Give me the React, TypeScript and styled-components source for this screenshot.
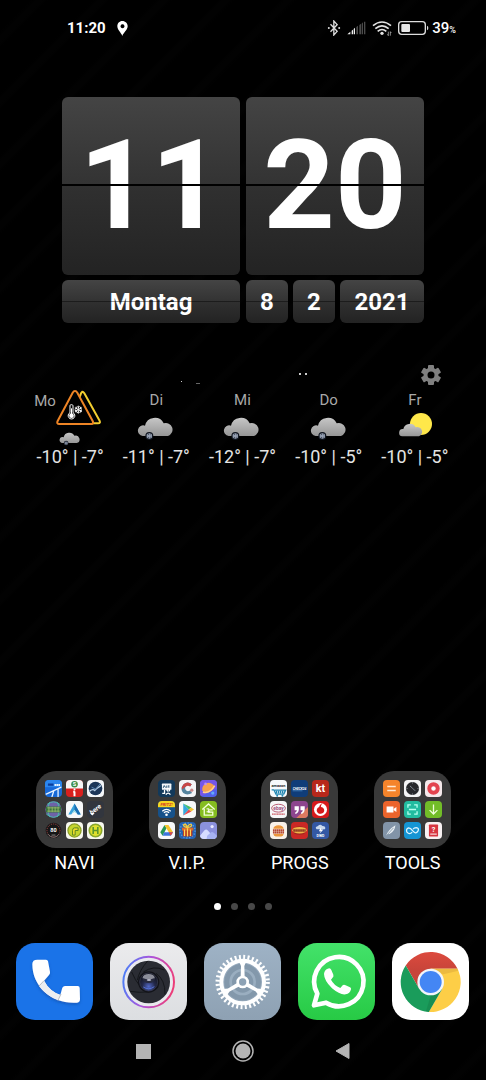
import React from "react";
import styled, { createGlobalStyle } from "styled-components";

const GlobalStyle = createGlobalStyle`
  *, *::before, *::after { box-sizing: border-box; }
  body {
    margin: 0;
    background: #000;
    color: #fff;
    font-family: Roboto, "Liberation Sans", sans-serif;
  }
  button { font: inherit; color: inherit; background: none; border: 0; padding: 0; cursor: pointer; }
  svg { display: block; }
`;

const Screen = styled.main`
  min-height: 100vh;
  display: flex;
  flex-direction: column;
  background: repeating-linear-gradient(135deg, #000 0 22px, #020202 26px 30px, #000 34px 44px);
`;

/* Status bar */

const StatusBar = styled.header`
  display: flex;
  align-items: center;
  justify-content: space-between;
  height: 56px;
  padding: 0 30px 0 67px;
`;

const StatusGroup = styled.div<{ $gap: number }>`
  display: flex;
  align-items: center;
  gap: ${(p) => p.$gap}px;
`;

const StatusTime = styled.span`
  font-size: 15px;
  font-weight: 700;
`;

const Percent = styled.span`
  font-size: 15px;
  font-weight: 500;
  small { font-size: 9px; }
`;

const BatteryGroup = styled.div`
  display: flex;
  align-items: center;
  gap: 3px;
`;

/* Flip clock */

const Clock = styled.section`
  display: grid;
  grid-template-columns: 1fr 1fr;
  gap: 5px 6px;
  margin-top: 41px;
  padding: 0 62px;
`;

const Flap = styled.div<{ $big?: boolean }>`
  position: relative;
  display: flex;
  align-items: center;
  justify-content: center;
  overflow: hidden;
  border-radius: 6px;
  background: linear-gradient(#444, #333 49%, #303030 50%, #232323);
  font-weight: 700;
  ${(p) => (p.$big ? "aspect-ratio: 1; font-size: 125px; line-height: 176px;" : "height: 43px; font-size: 24px;")}
  &::after {
    content: "";
    position: absolute;
    left: 0;
    right: 0;
    top: ${(p) => (p.$big ? "87px" : "21px")};
    height: ${(p) => (p.$big ? "2px" : "1px")};
    background: ${(p) => (p.$big ? "#000" : "rgba(0, 0, 0, 0.4)")};
  }
`;

const DateParts = styled.div`
  display: grid;
  grid-template-columns: 1fr 1fr 2fr;
  gap: 5px;
`;

/* Weather */

const Weather = styled.section`
  margin-top: 41px;
  padding: 0 28px 0 27px;
`;

const WeatherTop = styled.div`
  display: flex;
  align-items: center;
  justify-content: flex-end;
  gap: 110px;
  height: 25px;
  padding: 0 17px 3px 0;
`;

const Days = styled.div`
  display: grid;
  grid-template-columns: repeat(5, 1fr);
`;

const Day = styled.div`
  display: flex;
  flex-direction: column;
  align-items: center;
`;

const DayHead = styled.div`
  display: flex;
  flex-direction: column;
  align-items: center;
  gap: 1px;
  height: 57px;
`;

const AlertRow = styled.div`
  display: flex;
  align-items: flex-start;
  height: 41px;
  padding: 1px 5px 0 0;
`;

const DayName = styled.span`
  font-size: 15px;
  line-height: 22px;
  color: #a8a8a8;
`;

const Temps = styled.span`
  font-size: 18px;
  line-height: 22px;
  color: #e4e4e4;
  white-space: nowrap;
`;

const Spacer = styled.div`
  flex: 1;
  min-height: 24px;
`;

/* Folders */

const Folders = styled.section`
  display: grid;
  grid-template-columns: repeat(4, 1fr);
  padding: 0 17px 0 18px;
`;

const Folder = styled.button`
  display: flex;
  flex-direction: column;
  align-items: center;
  gap: 3px;
`;

const FolderTile = styled.span`
  display: grid;
  grid-template-columns: repeat(3, 17px);
  gap: 4px;
  padding: 9px;
  border-radius: 20px;
  background: #393939;
`;

const FolderLabel = styled.span`
  font-size: 18px;
  line-height: 24px;
`;

const MiniSvg = styled.svg`
  width: 17px;
  height: 17px;
  border-radius: 4px;
  overflow: hidden;
`;

/* Pager, dock and navigation */

const Pager = styled.div`
  display: flex;
  justify-content: center;
  gap: 10px;
  margin: 28px 0 33px;
`;

const Dot = styled.span<{ $active?: boolean }>`
  width: 7px;
  height: 7px;
  border-radius: 50%;
  background: ${(p) => (p.$active ? "#fff" : "#484848")};
`;

const Dock = styled.nav`
  display: flex;
  justify-content: space-between;
  padding: 0 17px 0 16px;
`;

const DockButton = styled.button`
  width: 77px;
  height: 77px;
  border-radius: 19px;
  overflow: hidden;
`;

const NavBar = styled.nav`
  display: flex;
  align-items: center;
  justify-content: center;
  gap: 76px;
  padding: 19px 1px 17px 0;
`;

const NavButton = styled.button`
  width: 24px;
  height: 24px;
`;

const CLOUD =
  "M371 245 A16 16 0 1 1 378 214 A30 30 0 0 1 434 207 A20 20 0 1 1 447 245 Z";

const Flake = ({ x, y, r = 9, color = "#b4c0d4" }: { x: number; y: number; r?: number; color?: string }) => (
  <g transform={`translate(${x} ${y})`} stroke={color} strokeWidth={r / 4.5} fill="none">
    {[0, 60, 120].map((a) => (
      <g key={a} transform={`rotate(${a})`}>
        <path d={`M0 ${-r} V${r} M${-r / 3} ${-r * 0.85} L0 ${-r * 0.5} L${r / 3} ${-r * 0.85} M${-r / 3} ${r * 0.85} L0 ${r * 0.5} L${r / 3} ${r * 0.85}`} />
      </g>
    ))}
  </g>
);

const CloudGradient = ({ id }: { id: string }) => (
  <linearGradient id={id} x1="0" y1="0" x2="0" y2="1">
    <stop offset="0" stopColor="#c6c6c6" />
    <stop offset="1" stopColor="#969696" />
  </linearGradient>
);

const SnowCloud = ({ small, id }: { small?: boolean; id: string }) => (
  <svg
    width={small ? 22 : 38}
    height={small ? 15 : 30}
    viewBox={small ? "354 182 114 78" : "354 173 114 90"}
    aria-hidden="true"
  >
    <defs><CloudGradient id={id} /></defs>
    <path d={CLOUD} fill={`url(#${id})`} />
    <circle cx="391" cy="245" r="12" fill="#10151f" />
    <Flake x={391} y={245} />
  </svg>
);

const SunCloud = () => (
  <svg width="38" height="30" viewBox="468 171 114 90" aria-hidden="true">
    <defs><CloudGradient id="sunCloud" /></defs>
    <circle cx="543" cy="207" r="33" fill="#ffe84a" />
    <path d="M487 244 A11 11 0 0 1 490 222 A20 20 0 0 1 527 217 A14 14 0 1 1 537 244 Z" fill="url(#sunCloud)" />
  </svg>
);

const AlertIcon = () => (
  <svg width="45" height="36" viewBox="107 107 135 108" aria-hidden="true">
    <path d="M186 112 Q189 112 192 117 L237 198 Q242 207 233 207 H150 L182 117 Z" fill="#000" stroke="#f2cd2f" strokeWidth="6" />
    <path d="M164 110 Q168 110 171 115 L217 200 Q221 209 213 209 H117 Q108 209 112 200 L157 115 Q160 110 164 110Z" fill="#000" stroke="#ee8425" strokeWidth="6" />
    <path d="M149 175 V154 Q149 151 153 151 Q158 151 158 154 V175 A10 10 0 1 1 149 175Z" fill="none" stroke="#fff" strokeWidth="3" />
    <path d="M153.500 162 V186" stroke="#fff" strokeWidth="3" />
    <circle cx="153.500" cy="184" r="7" fill="#fff" />
    <Flake x={174} y={166} r={12} color="#fff" />
  </svg>
);

const days = [
  { name: "Mo", temps: "-10° | -7°" },
  { name: "Di", temps: "-11° | -7°" },
  { name: "Mi", temps: "-12° | -7°" },
  { name: "Do", temps: "-10° | -5°" },
  { name: "Fr", temps: "-10° | -5°" },
];

/* Small app icons, each drawn on a 52 x 52 field */

const Mini = ({ bg, children }: { bg: string; children?: React.ReactNode }) => (
  <MiniSvg viewBox="0 0 52 52" aria-hidden="true">
    <rect width="52" height="52" fill={bg} />
    {children}
  </MiniSvg>
);

const Word = ({ x = 26, y, size, fill = "#fff", italic, children }: { x?: number; y: number; size: number; fill?: string; italic?: boolean; children: string }) => (
  <text x={x} y={y} fontSize={size} fill={fill} fontWeight="700" fontStyle={italic ? "italic" : "normal"} textAnchor="middle">
    {children}
  </text>
);

const naviIcons = [
  <Mini key="map" bg="#1769d8">
    <rect width="52" height="22" fill="#2b86ee" />
    <path d="M2 44 L50 22 M21 52 L27 33 M40 52 V28" stroke="#e8f3ff" strokeWidth="4" />
    <path d="M9 14 H26" fill="none" stroke="#0b3c9a" strokeWidth="7" />
    <path d="M29 15 H47" stroke="#e8f3ff" strokeWidth="6" strokeDasharray="5 1" />
  </Mini>,
  <Mini key="sbahn" bg="#d9201d">
    <rect width="52" height="26" fill="#f6f6f6" />
    <circle cx="26" cy="13" r="10" fill="#3b8c46" />
    <Word y={19} size={17}>S</Word>
    <path d="M26 35 V50 M22 36 H27" stroke="#fff" strokeWidth="6" />
    <circle cx="26" cy="29" r="3" fill="#fff" />
  </Mini>,
  <Mini key="nina" bg="#f4f6f8">
    <circle cx="26" cy="26" r="21" fill="#1c3658" />
    <path d="M8 34 Q18 26 24 32 Q30 24 43 17" fill="none" stroke="#bcd3e8" strokeWidth="4" />
    <path d="M14 22 L26 28 L40 12" fill="none" stroke="#5c88b4" strokeWidth="3" />
  </Mini>,
  <Mini key="globe" bg="#393939">
    <circle cx="26" cy="26" r="25" fill="#6d62a8" />
    <path d="M7 10 Q26 -5 45 10 M4 40 Q26 60 48 40 M14 4 Q4 26 14 48 M38 4 Q48 26 38 48" fill="none" stroke="#4bb7ad" strokeWidth="3" />
    <rect x="3" y="17" width="46" height="18" fill="#37753c" />
    <path d="M7 21 H45 M7 31 H45 M12 18 V34 M22 18 V34 M31 18 V34 M40 18 V34" stroke="#93b16b" strokeWidth="3" />
  </Mini>,
  <Mini key="nav" bg="#f7f8f8">
    <path d="M26 8 L45 41 H36 L26 27 L16 41 H7 Z" fill="#3aa4dd" />
    <path d="M26 8 L45 41 H36 L26 27Z" fill="#1b6fb4" />
    <path d="M26 27 L34 39 L26 34 L18 39Z" fill="#8cd5df" />
  </Mini>,
  <Mini key="here" bg="#32363e">
    <g transform="rotate(-38 26 26)">
      <Word y={32} size={20} italic>here</Word>
    </g>
    <path d="M9 37 H23 L17 44 Z" fill="#fff" />
  </Mini>,
  <Mini key="speed" bg="#393939">
    <circle cx="26" cy="26" r="24" fill="#161616" />
    <circle cx="26" cy="26" r="20" fill="none" stroke="#a84848" strokeWidth="3" strokeDasharray="3 3" />
    <path d="M9 37 A20 20 0 0 0 43 37" fill="none" stroke="#999" strokeWidth="2" />
    <Word y={31} size={17}>80</Word>
    <path d="M20 40 H32" stroke="#888" strokeWidth="3" />
  </Mini>,
  <Mini key="bus" bg="#f7f8ee">
    <circle cx="26" cy="26" r="20" fill="#c4d62d" stroke="#8c9f27" strokeWidth="4" />
    <path d="M20 40 V26 Q20 18 26 18 H37 V26 H28 V40Z" fill="#f0dc2c" stroke="#5c8726" strokeWidth="3" />
  </Mini>,
  <Mini key="stop" bg="#f7f8ee">
    <circle cx="26" cy="26" r="19" fill="#dfe02d" stroke="#8aa82c" strokeWidth="5" />
    <path d="M19 15 V37 M33 15 V37 M19 26 H33" stroke="#5b962d" strokeWidth="5" />
  </Mini>,
];

const vipIcons = [
  <Mini key="home" bg="#12395a">
    <rect x="12" y="11" width="29" height="19" rx="2" fill="#f3f7fa" />
    <path d="M16 24 L19 17 L23 23 M27 17 V24 M33 16 V24" fill="none" stroke="#23506f" strokeWidth="3" />
    <path d="M20 30 V41 H13 M31 34 A4 4 0 1 1 32 34 M24 45 Q31 35 38 45" fill="none" stroke="#fff" strokeWidth="4" />
  </Mini>,
  <Mini key="corona" bg="#f4f5f7">
    <path d="M39 13 Q27 2 14 13 Q2 27 13 40 Q25 49 40 40 L34 32 Q25 37 20 30 Q16 22 24 17 Q30 15 34 20Z" fill="#56849e" />
    <path d="M14 13 Q26 2 39 13 L34 20 Q27 15 21 20 L9 29 Q7 20 14 13Z" fill="#c94747" />
    <circle cx="39" cy="31" r="5" fill="#ca8888" />
  </Mini>,
  <Mini key="planet" bg="#5262e8">
    <path d="M0 0 H52 V26 L0 52Z" fill="#7556e8" />
    <path d="M7 33 A20 20 0 0 1 44 19 Q43 30 28 35 Q15 39 7 33Z" fill="#f6a14d" />
    <path d="M9 37 Q30 43 45 17" fill="none" stroke="#ffd18c" strokeWidth="5" />
    <circle cx="17" cy="12" r="4" fill="#bd8df5" /><circle cx="39" cy="40" r="5" fill="#65aaf8" />
  </Mini>,
  <Mini key="fritz" bg="#16518a">
    <rect width="52" height="19" fill="#f7d820" />
    <Word y={15} size={13} fill="#d3302a" italic>FRITZ!</Word>
    <path d="M13 31 Q26 20 39 31 M18 36 Q26 29 34 36" fill="none" stroke="#fff" strokeWidth="4" />
    <circle cx="26" cy="42" r="4" fill="#fff" />
  </Mini>,
  <Mini key="play" bg="#f8f9fa">
    <path d="M13 8 V44 L30 26Z" fill="#36a9df" />
    <path d="M13 8 L38 20 L30 26Z" fill="#43bd69" />
    <path d="M13 44 L38 32 L30 26Z" fill="#e54850" />
    <path d="M37 20 L46 26 L37 32 L30 26Z" fill="#f4c338" />
  </Mini>,
  <Mini key="house" bg="#85bd20">
    <path d="M7 26 L26 9 L45 26 M13 24 V43 H39 V34 H26 V27 H39" fill="none" stroke="#f3ffd8" strokeWidth="4" />
    <path d="M20 33 H31 M20 24 H28" stroke="#fff" strokeWidth="3" />
  </Mini>,
  <Mini key="drive" bg="#f8f9fa">
    <path d="M20 9 L26 19 L14 42 L7 31Z" fill="#299756" />
    <path d="M20 9 H32 L46 31 H33Z" fill="#f6c32d" />
    <path d="M19 31 H46 L39 42 H14Z" fill="#3d77df" />
    <path d="M33 31 H46 L39 42Z" fill="#df493d" />
  </Mini>,
  <Mini key="gift" bg="#2463b4">
    <circle cx="26" cy="26" r="23" fill="none" stroke="#599adf" strokeWidth="4" strokeDasharray="4 5" />
    <rect x="12" y="23" width="29" height="21" fill="#b73520" />
    <rect x="9" y="17" width="35" height="9" fill="#db6a29" />
    <path d="M26 16 V44 M17 23 V43 M35 23 V43" stroke="#ffd559" strokeWidth="4" />
    <path d="M26 17 Q9 12 16 7 Q23 6 26 17 Q30 5 37 8 Q43 13 26 17" fill="none" stroke="#f2c941" strokeWidth="4" />
  </Mini>,
  <Mini key="gallery" bg="#8b91dd">
    <circle cx="37" cy="14" r="5" fill="#e9eaff" />
    <path d="M0 42 L13 26 Q19 20 24 26 L47 52 H0Z" fill="#d6dcff" />
    <path d="M22 42 L33 32 Q37 29 42 33 L52 42 V52 H20Z" fill="#a7b3f2" />
  </Mini>,
];

const progsIcons = [
  <Mini key="amazon" bg="#f7f9fa">
    <Word y={22} size={12} fill="#26292b">amazon</Word>
    <path d="M5 30 H12 L18 43 H42 L48 31 H15" fill="none" stroke="#2287b3" strokeWidth="4" />
    <path d="M18 37 H44" stroke="#2287b3" strokeWidth="8" strokeDasharray="4 2" />
    <circle cx="22" cy="48" r="3" fill="#2287b3" /><circle cx="38" cy="48" r="3" fill="#2287b3" />
  </Mini>,
  <Mini key="check" bg="#103d79">
    <Word y={30} size={10} italic>CHECK24</Word>
    <path d="M5 33 H35" stroke="#5a9bd5" strokeWidth="2" />
  </Mini>,
  <Mini key="kt" bg="#b7281b"><Word y={37} size={33}>kt</Word></Mini>,
  <Mini key="ebay" bg="#f6f7f8">
    <ellipse cx="26" cy="22" rx="21" ry="12" fill="none" stroke="#b85a72" strokeWidth="3" />
    <Word y={27} size={15} fill="#9e517f">ebay</Word>
    <path d="M6 40 H46" fill="none" stroke="#cc5860" strokeWidth="4" strokeDasharray="4 1" />
  </Mini>,
  <Mini key="quotes" bg="#8d458e">
    <path d="M52 18 V52 H16Z" fill="#de7a60" />
    <path d="M11 16 H24 V26 Q23 37 13 40 V35 Q18 32 18 28 H11Z M29 16 H42 V26 Q41 37 31 40 V35 Q36 32 36 28 H29Z" fill="#fff" />
  </Mini>,
  <Mini key="vodafone" bg="#d51a1b">
    <circle cx="26" cy="26" r="20" fill="#fff" />
    <path d="M33 7 Q23 10 22 18 C9 23 14 40 27 39 C43 36 39 19 27 18 Q27 11 33 7Z" fill="#d51a1b" />
  </Mini>,
  <Mini key="burger" bg="#f8f1e9">
    <path d="M10 21 Q12 10 26 10 Q40 10 42 21Z M10 36 H42 Q41 44 34 44 H18 Q11 44 10 36Z" fill="#eb963c" />
    <path d="M9 25 H43 M9 32 H43" stroke="#b54733" strokeWidth="6" strokeDasharray="5 1" />
  </Mini>,
  <Mini key="pizza" bg="#cb2825">
    <path d="M6 19 Q26 7 46 19 L41 37 Q25 42 10 36Z" fill="#9f291e" />
    <ellipse cx="26" cy="25" rx="22" ry="10" fill="#f2b348" />
    <path d="M7 26 H45" stroke="#8a361f" strokeWidth="7" strokeDasharray="5 1" />
  </Mini>,
  <Mini key="dwd" bg="#3358a4">
    <path d="M14 22 Q8 15 17 13 Q24 4 32 12 Q43 12 40 22Z" fill="#c8d9ee" />
    <path d="M27 17 L21 28 H27 L23 36 L35 23 H28Z" fill="#fff" />
    <Word y={47} size={11}>DWD</Word>
  </Mini>,
];

const toolsIcons = [
  <Mini key="calc" bg="#f5842b"><path d="M13 20 H39 M13 32 H39" stroke="#ffe8d2" strokeWidth="5" /></Mini>,
  <Mini key="compass" bg="#f4f5f6">
    <circle cx="26" cy="26" r="20" fill="#27292d" />
    <path d="M18 18 L26 25 L34 33" stroke="#889098" strokeWidth="3" />
    <path d="M26 7 V11 M26 41 V45 M7 26 H11 M41 26 H45" stroke="#a6adb4" strokeWidth="2" />
  </Mini>,
  <Mini key="record" bg="#f4e8ea">
    <circle cx="26" cy="26" r="13" fill="none" stroke="#e3434e" strokeWidth="12" />
    <circle cx="26" cy="26" r="5" fill="#fff" />
  </Mini>,
  <Mini key="video" bg="#ec642c"><path d="M11 17 H32 V35 H11Z M33 24 L41 18 V34 L33 28Z" fill="#fff" /></Mini>,
  <Mini key="scan" bg="#22bca0">
    <path d="M12 21 V12 H21 M31 12 H40 V21 M40 31 V40 H31 M21 40 H12 V31 M15 26 H37" fill="none" stroke="#b5fff0" strokeWidth="4" />
  </Mini>,
  <Mini key="download" bg="#72bd28"><path d="M26 11 V39 M14 28 L26 40 L38 28" fill="none" stroke="#efffd8" strokeWidth="4" /></Mini>,
  <Mini key="feather" bg="#8294a8">
    <path d="M9 43 Q15 24 38 10 Q36 29 21 36 Q15 36 9 43Z" fill="#eaf0f5" />
    <path d="M10 42 L32 18" stroke="#657e94" strokeWidth="2" />
  </Mini>,
  <Mini key="share" bg="#1595d4">
    <path d="M25 31 Q17 40 9 31 Q5 21 14 18 Q20 18 27 27 Q36 38 42 29 Q48 18 37 17 Q31 17 28 22" fill="none" stroke="#dff5ff" strokeWidth="4" />
  </Mini>,
  <Mini key="manual" bg="#f8f1f2">
    <rect x="12" y="8" width="28" height="36" rx="2" fill="#d83540" />
    <Word y={30} size={22}>?</Word>
    <path d="M16 37 H36" stroke="#fff" strokeWidth="3" />
  </Mini>,
];

const folders = [
  { name: "NAVI", icons: naviIcons },
  { name: "V.I.P.", icons: vipIcons },
  { name: "PROGS", icons: progsIcons },
  { name: "TOOLS", icons: toolsIcons },
];

/* Dock icons, each drawn on a 231 x 231 field */

const DockSvg = ({ children }: { children: React.ReactNode }) => (
  <svg width="77" height="77" viewBox="0 0 231 231" aria-hidden="true">{children}</svg>
);

const PhoneIcon = () => (
  <DockSvg>
    <defs>
      <filter id="phoneShadow" x="-20%" y="-20%" width="140%" height="150%">
        <feDropShadow dx="0" dy="5" stdDeviation="4" floodColor="#0b3f94" floodOpacity="0.5" />
      </filter>
    </defs>
    <rect width="231" height="231" fill="#1a73e8" />
    <g transform="translate(-48 -159)" filter="url(#phoneShadow)">
      <path d="M112 209 H138 Q143 209 144 214 L150 246 Q151 251 147 255 L132 272 Q148 303 181 315 L187 293 Q190 288 195 288 H233 Q239 288 239 294 L240 327 Q240 337 231 338 C155 343 97 290 97 222 Q97 209 112 209Z" fill="#fff" />
      <path d="M132 272 Q148 303 181 315 L174 330 Q139 317 117 288Z" fill="#eceef0" />
      <path d="M132 272 L117 288 M183 312 L174 331" stroke="#b9bdc2" strokeWidth="3" />
    </g>
  </DockSvg>
);

const CameraIcon = () => (
  <DockSvg>
    <defs>
      <linearGradient id="camBg" x1="0" y1="0" x2="0" y2="1">
        <stop offset="0" stopColor="#ebebed" /><stop offset="1" stopColor="#dcdee1" />
      </linearGradient>
      <linearGradient id="camRing" x1="0" y1="0.4" x2="1" y2="0.6">
        <stop offset="0" stopColor="#4f7df5" /><stop offset="0.45" stopColor="#ac54dc" /><stop offset="1" stopColor="#ee3d76" />
      </linearGradient>
      <radialGradient id="camLens" cx="0.5" cy="0.75" r="0.7">
        <stop offset="0" stopColor="#5268c8" /><stop offset="0.5" stopColor="#232849" /><stop offset="1" stopColor="#11131a" />
      </radialGradient>
    </defs>
    <rect width="231" height="231" fill="url(#camBg)" />
    <circle cx="116" cy="117" r="76" fill="#e9e9ee" stroke="url(#camRing)" strokeWidth="6" />
    <circle cx="116" cy="117" r="64" fill="#2a2c33" />
    <path d="M82 111 Q88 82 113 54 M100 87 Q131 66 163 81 M138 91 Q166 110 165 154 M145 132 Q121 155 60 145 M117 147 Q87 139 65 87" fill="none" stroke="#15171b" strokeWidth="3" />
    <circle cx="116" cy="117" r="32" fill="#121319" />
    <circle cx="116" cy="117" r="27" fill="url(#camLens)" stroke="#3c4054" strokeWidth="2" />
    <ellipse cx="116" cy="104" rx="18" ry="11" fill="#8b8d99" />
    <path d="M98 105 Q116 113 134 105 Q134 120 116 120 Q99 120 98 105Z" fill="#272a3e" />
    <ellipse cx="117" cy="111" rx="7" ry="2" fill="#e5e5f2" />
    <path d="M100 132 Q116 143 133 131" fill="none" stroke="#5571d4" strokeWidth="3" />
  </DockSvg>
);

const SettingsIcon = () => (
  <DockSvg>
    <defs>
      <linearGradient id="setBg" x1="0" y1="0" x2="0" y2="1">
        <stop offset="0" stopColor="#9eb2c5" /><stop offset="1" stopColor="#8ea1b3" />
      </linearGradient>
    </defs>
    <rect width="231" height="231" fill="url(#setBg)" />
    <g transform="translate(116 117)" fill="none">
      <circle r="55" fill="#8398ab" />
      <circle r="36" stroke="#9aaec0" strokeWidth="8" />
      <circle r="64" stroke="#fff" strokeWidth="12" />
      <circle r="75" stroke="#fff" strokeWidth="13" pathLength="72" strokeDasharray="0.9 1.1" />
      {[0, 120, 240].map((a) => (
        <path key={a} transform={`rotate(${a})`} d="M-6 -16 L-5 -48 L-10 -60 H10 L5 -48 L6 -16Z" fill="#fff" />
      ))}
      <circle r="15" fill="#8da2b5" stroke="#fff" strokeWidth="8" />
    </g>
  </DockSvg>
);

const WhatsAppIcon = () => (
  <DockSvg>
    <defs>
      <linearGradient id="waBg" x1="0" y1="0" x2="0" y2="1">
        <stop offset="0" stopColor="#43e26a" /><stop offset="1" stopColor="#27ca45" />
      </linearGradient>
    </defs>
    <rect width="231" height="231" fill="url(#waBg)" />
    <g transform="translate(-309 -159)">
      <path d="M357 346 L367 311 A74 74 0 1 1 393 338 Z" fill="none" stroke="#fff" strokeWidth="14" strokeLinejoin="round" />
      <path d="M398 236 Q406 232 409 240 L415 254 Q417 259 412 264 L408 269 Q417 286 436 294 L443 286 Q446 283 450 285 L465 292 Q469 294 468 298 Q465 311 452 313 Q436 316 411 295 Q387 271 387 252 Q388 240 398 236Z" fill="#fff" />
    </g>
  </DockSvg>
);

const ChromeIcon = () => (
  <DockSvg>
    <defs>
      <linearGradient id="redShade" gradientUnits="userSpaceOnUse" x1="0" y1="-90" x2="0" y2="-36">
        <stop offset="0" stopColor="#dc4a3e" /><stop offset="1" stopColor="#c8443a" />
      </linearGradient>
    </defs>
    <rect width="231" height="231" fill="#fff" />
    <g transform="translate(116 117)">
      <path d="M-74.900 -49.800 A90 90 0 0 1 80.600 -40 H0 V0 L-34.600 20Z" fill="url(#redShade)" />
      <path d="M80.600 -40 A90 90 0 0 1 -5.700 89.800 L34.600 20 L0 0 V-40Z" fill="#fdce47" />
      <path d="M-5.700 89.800 A90 90 0 0 1 -74.900 -49.800 L-34.600 20 L0 0 L34.600 20Z" fill="#1a9c5b" />
      <path d="M0 -40 H80.600 L83 -34 L38 -23Z" fill="#dba63a" opacity="0.5" />
      <path d="M34.600 20 L-5.700 89.800 L-14 88 L0 41Z" fill="#147b47" opacity="0.4" />
      <circle r="40" fill="#f2f5f9" />
      <circle r="33" fill="#4486f4" />
    </g>
  </DockSvg>
);

const dock = [
  { name: "Telefon", icon: <PhoneIcon /> },
  { name: "Kamera", icon: <CameraIcon /> },
  { name: "Einstellungen", icon: <SettingsIcon /> },
  { name: "WhatsApp", icon: <WhatsAppIcon /> },
  { name: "Chrome", icon: <ChromeIcon /> },
];

export default function App() {
  return (
    <>
      <GlobalStyle />
      <Screen>
        <StatusBar>
          <StatusGroup $gap={11}>
            <StatusTime>11:20</StatusTime>
            <svg width="11" height="15" viewBox="0 0 33 45" aria-hidden="true">
              <path d="M16 0 C25 0 32 7 32 16 C32 27 20 34 16 45 C12 34 1 27 1 16 C1 7 7 0 16 0Z M16 10 A6 6 0 1 0 17 10Z" fill="#fff" fillRule="evenodd" />
            </svg>
          </StatusGroup>
          <StatusGroup $gap={6}>
            <svg width="14" height="16" viewBox="0 0 39 48" aria-hidden="true">
              <path d="M9 13 L29 34 L19 45 V3 L29 14 L9 35" fill="none" stroke="#ddd" strokeWidth="4" />
              <circle cx="4" cy="24" r="3" fill="#ddd" /><circle cx="35" cy="24" r="3" fill="#ddd" />
            </svg>
            <svg width="19" height="14" viewBox="0 0 57 42" aria-hidden="true">
              <path d="M1 40 L10 32 V40Z M14 29 L18 26 V40 H14Z M20 24 L24 20 V40 H20Z" fill="#eee" />
              <path d="M28 18 L33 14 V40 H28Z M37 12 L42 8 V40 H37Z M44 8 L48 4 V40 H44Z M51 2 H55 V40 H51Z" fill="#4b4b4b" />
            </svg>
            <svg width="20" height="15" viewBox="0 0 60 45" aria-hidden="true">
              <path d="M3 14 Q30 -8 57 14 M10 23 Q30 6 50 23 M17 31 Q30 20 43 31" fill="none" stroke="#e2e2e2" strokeWidth="5" />
              <circle cx="30" cy="37" r="5" fill="#e2e2e2" />
              <path d="M49 32 V44 M46 40 L49 44 M55 44 V32 M58 36 L55 32" fill="none" stroke="#ccc" strokeWidth="2" />
            </svg>
            <BatteryGroup>
              <svg width="31" height="14" viewBox="0 0 93 42" aria-hidden="true">
                <rect x="2" y="2" width="80" height="38" rx="9" fill="none" stroke="#ddd" strokeWidth="4" />
                <rect x="10" y="9" width="26" height="24" rx="3" fill="#e8e8e8" />
                <path d="M87 14 Q91 15 91 21 Q91 27 87 28Z" fill="#ddd" />
              </svg>
              <Percent>39<small>%</small></Percent>
            </BatteryGroup>
          </StatusGroup>
        </StatusBar>

        <Clock>
          <Flap $big>11</Flap>
          <Flap $big>20</Flap>
          <Flap>Montag</Flap>
          <DateParts>
            <Flap>8</Flap>
            <Flap>2</Flap>
            <Flap>2021</Flap>
          </DateParts>
        </Clock>

        <Weather>
          <WeatherTop>
            <svg width="130" height="20" viewBox="0 0 130 20" aria-hidden="true">
              <g fill="#ccc">
                <rect x="118" y="8" width="2" height="2" /><rect x="124" y="8" width="2" height="2" />
                <rect x="0" y="16" width="1" height="1" /><rect x="15" y="18" width="4" height="1" opacity="0.5" />
              </g>
            </svg>
            <button aria-label="Wetter-Einstellungen">
              <svg width="20" height="20" viewBox="0 0 20 20" aria-hidden="true">
                <g transform="translate(10 10)" fill="#808080">
                  {[0, 60, 120].map((a) => (
                    <rect key={a} x="-3" y="-10" width="6" height="20" rx="1" transform={`rotate(${a})`} />
                  ))}
                  <circle r="7.500" />
                  <circle r="3.500" fill="#000" />
                </g>
              </svg>
            </button>
          </WeatherTop>
          <Days>
            {days.map((d, i) => (
              <Day key={d.name}>
                <DayHead>
                  {i === 0 ? (
                    <>
                      <AlertRow><DayName>{d.name}</DayName><AlertIcon /></AlertRow>
                      <SnowCloud small id="cloud0" />
                    </>
                  ) : (
                    <>
                      <DayName>{d.name}</DayName>
                      {i === 4 ? <SunCloud /> : <SnowCloud id={`cloud${i}`} />}
                    </>
                  )}
                </DayHead>
                <Temps>{d.temps}</Temps>
              </Day>
            ))}
          </Days>
        </Weather>

        <Spacer />

        <Folders>
          {folders.map((f) => (
            <Folder key={f.name}>
              <FolderTile>{f.icons}</FolderTile>
              <FolderLabel>{f.name}</FolderLabel>
            </Folder>
          ))}
        </Folders>

        <Pager>
          <Dot $active /><Dot /><Dot /><Dot />
        </Pager>

        <Dock>
          {dock.map((d) => (
            <DockButton key={d.name} aria-label={d.name}>{d.icon}</DockButton>
          ))}
        </Dock>

        <NavBar>
          <NavButton aria-label="Übersicht">
            <svg width="24" height="24" viewBox="0 0 24 24"><rect x="5" y="5" width="15" height="15" fill="#b4b4b4" /></svg>
          </NavButton>
          <NavButton aria-label="Startseite">
            <svg width="24" height="24" viewBox="0 0 24 24">
              <circle cx="12" cy="12" r="10" fill="none" stroke="#b4b4b4" strokeWidth="1.500" />
              <circle cx="12" cy="12" r="7.500" fill="#b4b4b4" />
            </svg>
          </NavButton>
          <NavButton aria-label="Zurück">
            <svg width="24" height="24" viewBox="0 0 24 24"><path d="M5 12 L18 4.500 V19.500Z" fill="#b4b4b4" stroke="#b4b4b4" strokeLinejoin="round" /></svg>
          </NavButton>
        </NavBar>
      </Screen>
    </>
  );
}
